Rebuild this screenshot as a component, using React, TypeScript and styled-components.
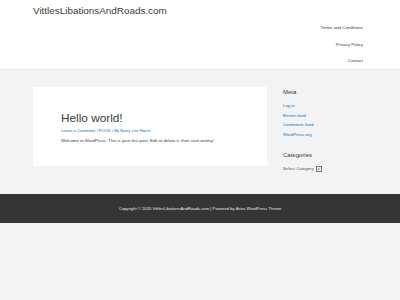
import React, { FC } from "react";
import styled, { createGlobalStyle } from "styled-components";

const GlobalStyle = createGlobalStyle`
  html, body {
    margin: 0;
    padding: 0;
    background: #f3f3f3;
    font-family: "Liberation Sans", Arial, sans-serif;
  }
`;

const Page = styled.div`
  width: 400px;
  min-height: 300px;
  background: #f3f3f3;
`;

const Header = styled.header`
  height: 70px;
  background: #fff;
  border-bottom: 1px solid #e8e8e8;
  display: flex;
  justify-content: space-between;
  box-sizing: border-box;
  padding: 0 37px 0 33px;
`;

const SiteTitle = styled.a`
  font-size: 9.9px;
  color: #3a3a3a;
  margin-top: 4px;
  line-height: 13px;
  text-decoration: none;
`;

const Nav = styled.nav`
  display: flex;
  flex-direction: column;
  align-items: flex-end;
  padding-top: 25px;
  gap: 10.5px;
`;

const NavLink = styled.a`
  font-size: 4.4px;
  line-height: 6px;
  color: #3a3a3a;
  text-decoration: none;
`;

const Main = styled.div`
  display: flex;
  padding: 17px 0 0 33px;
  gap: 16px;
`;

const Card = styled.article`
  width: 234px;
  height: 79px;
  background: #fff;
  box-sizing: border-box;
  padding: 23px 28px;
`;

const PostTitle = styled.h1`
  margin: 0;
  font-size: 11.8px;
  font-weight: 400;
  line-height: 16px;
  color: #3a3a3a;
`;

const PostMeta = styled.div`
  margin-top: 2px;
  font-size: 4.2px;
  line-height: 6px;
  color: #0274be;
`;

const PostText = styled.p`
  margin: 4px 0 0;
  font-size: 4.3px;
  line-height: 6px;
  color: #3a3a3a;
`;

const Sidebar = styled.aside`
  display: flex;
  flex-direction: column;
  padding-top: 1px;
`;

const WidgetTitle = styled.h2<{ $top?: number }>`
  margin: ${(p) => p.$top ?? 0}px 0 0;
  font-size: 6px;
  font-weight: 400;
  line-height: 8px;
  color: #3a3a3a;
`;

const LinkList = styled.ul`
  list-style: none;
  margin: 7px 0 0;
  padding: 0;
  display: flex;
  flex-direction: column;
  gap: 3.5px;
`;

const SideLink = styled.li`
  font-size: 4.3px;
  line-height: 6px;
  color: #0274be;
`;

const Select = styled.div`
  margin-top: 7px;
  display: flex;
  align-items: center;
  gap: 2px;
  font-size: 4.3px;
  line-height: 6px;
  color: #555;
`;

const SelectArrow = styled.span`
  width: 4px;
  height: 4px;
  border: 0.5px solid #777;
  background: #eee;
  display: flex;
  align-items: center;
  justify-content: center;
  font-size: 3px;
  color: #333;
`;

const Footer = styled.footer`
  margin-top: 22px;
  height: 29px;
  background: #353535;
  display: flex;
  align-items: center;
  justify-content: center;
  font-size: 4.2px;
  color: #e6e6e6;
`;

const App: FC = () => {
  return (
    <Page>
      <GlobalStyle />
      <Header>
        <SiteTitle>VittlesLibationsAndRoads.com</SiteTitle>
        <Nav>
          <NavLink>Terms and Conditions</NavLink>
          <NavLink>Privacy Policy</NavLink>
          <NavLink>Contact</NavLink>
        </Nav>
      </Header>
      <Main>
        <Card>
          <PostTitle>Hello world!</PostTitle>
          <PostMeta>Leave a Comment / FOOD / By Barry Lee Harris</PostMeta>
          <PostText>
            Welcome to WordPress. This is your first post. Edit or delete it,
            then start writing!
          </PostText>
        </Card>
        <Sidebar>
          <WidgetTitle>Meta</WidgetTitle>
          <LinkList>
            <SideLink>Log in</SideLink>
            <SideLink>Entries feed</SideLink>
            <SideLink>Comments feed</SideLink>
            <SideLink>WordPress.org</SideLink>
          </LinkList>
          <WidgetTitle $top={13}>Categories</WidgetTitle>
          <Select>
            Select Category <SelectArrow>▾</SelectArrow>
          </Select>
        </Sidebar>
      </Main>
      <Footer>
        Copyright © 2020 VittlesLibationsAndRoads.com | Powered by Astra
        WordPress Theme
      </Footer>
    </Page>
  );
};

export default App;
